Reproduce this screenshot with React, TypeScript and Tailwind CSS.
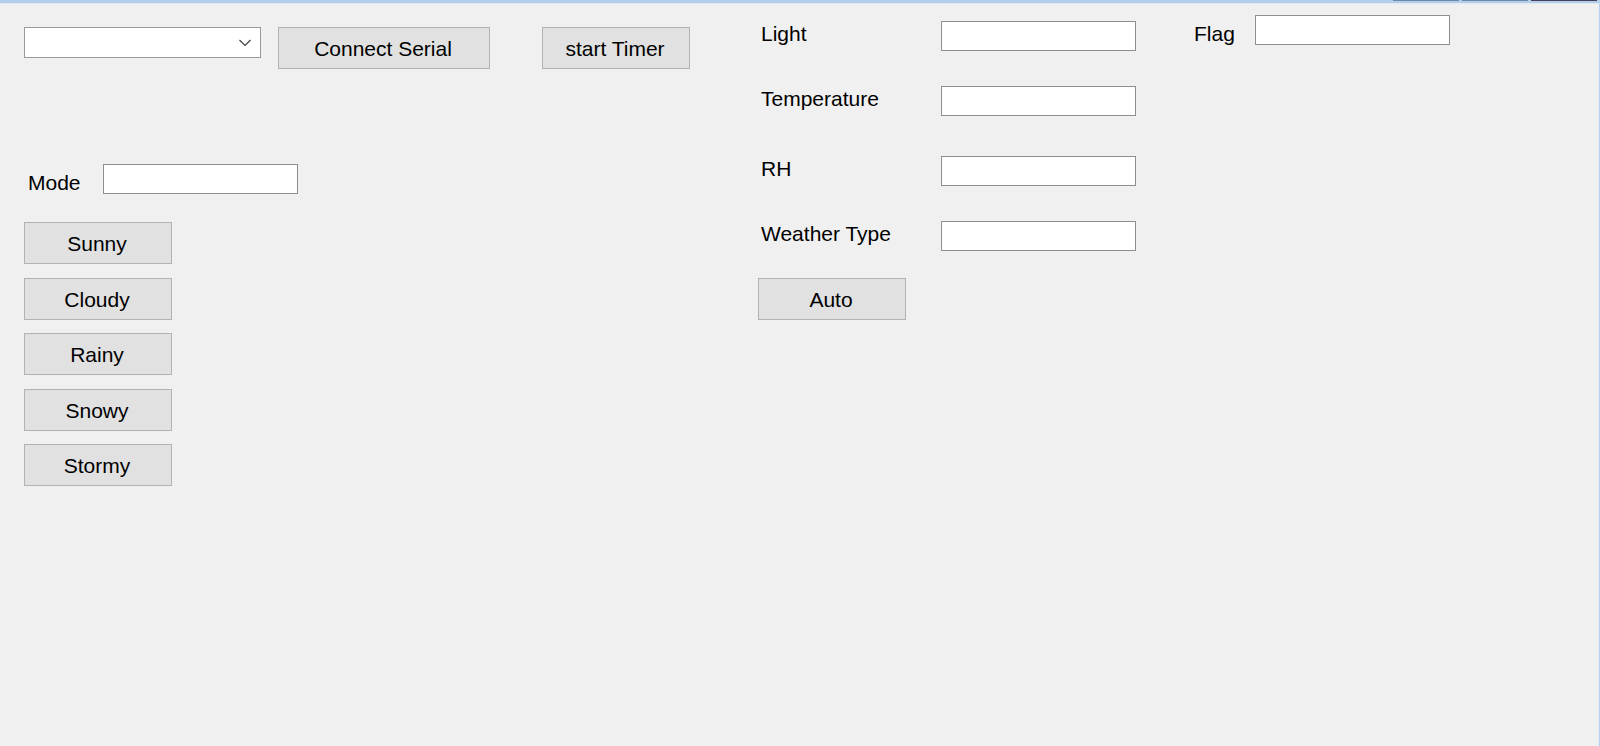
import type { ReactNode } from "react";

const weatherModes = ["Sunny", "Cloudy", "Rainy", "Snowy", "Stormy"];

function Button({ children, wide = false }: { children: ReactNode; wide?: boolean }) {
  return (
    <button
      type="button"
      className={`${wide ? "w-[212px]" : "w-[148px]"} h-[42px] shrink-0 border border-[#b2b2b2] bg-[#e1e1e1] pt-0.5 pr-0.5 text-center`}
    >
      {children}
    </button>
  );
}

function TextBox({ id }: { id: string }) {
  return (
    <input
      id={id}
      type="text"
      className="h-[30px] w-[195px] shrink-0 border border-[#8e8e8e] bg-white px-1 outline-none"
    />
  );
}

function Reading({ id, label }: { id: string; label: string }) {
  return (
    <div className="flex items-start">
      <label htmlFor={id} className="w-[180px] shrink-0 leading-[26px]">
        {label}
      </label>
      <TextBox id={id} />
    </div>
  );
}

export default function App() {
  return (
    <div className="flex min-h-screen flex-col border-r border-[#b9d1ea] bg-[#f0f0f0] font-['Liberation_Sans',Arial,sans-serif] text-[21px] leading-[22px] text-black">
      <header className="flex h-1 items-start justify-end gap-[3px] border-b border-[#dfe9f3] bg-[#b4cde8] pr-0.5">
        <span className="h-px w-[66px] bg-[#6f87ac]" />
        <span className="h-px w-[66px] bg-[#6f87ac]" />
        <span className="h-px w-[66px] bg-[#453f5c]" />
      </header>

      <main className="grid grow grid-cols-[758fr_436fr_404fr] items-start border-r border-[#e3edf6]">
        <section className="pt-[23px] pl-6">
          <div className="flex items-start">
            <div className="relative">
              <select
                aria-label="Serial port"
                className="block h-[31px] w-[237px] appearance-none border border-[#9a9a9a] bg-white px-1 outline-none"
              >
                <option value=""></option>
              </select>
              <svg
                viewBox="0 0 12 8"
                className="pointer-events-none absolute top-3 right-[10px] h-2 w-3"
                fill="none"
                stroke="#404040"
                strokeWidth="1.2"
              >
                <path d="M0.5 1 L6 6.5 L11.5 1" />
              </svg>
            </div>
            <div className="flex gap-[52px] pl-[17px]">
              <Button wide>Connect Serial</Button>
              <Button>start Timer</Button>
            </div>
          </div>

          <div className="flex items-end pt-[95px] pl-1">
            <label htmlFor="mode" className="w-[75px]">
              Mode
            </label>
            <TextBox id="mode" />
          </div>

          <div className="flex h-[292px] flex-col justify-between pt-7">
            {weatherModes.map((mode) => (
              <Button key={mode}>{mode}</Button>
            ))}
          </div>
        </section>

        <section className="pt-[17px]">
          <div className="flex flex-col gap-10 pl-[3px]">
            <div className="flex flex-col gap-[35px]">
              <Reading id="light" label="Light" />
              <Reading id="temperature" label="Temperature" />
            </div>
            <div className="flex flex-col gap-[35px]">
              <Reading id="rh" label="RH" />
              <Reading id="weather-type" label="Weather Type" />
            </div>
          </div>
          <div className="pt-[27px]">
            <Button>Auto</Button>
          </div>
        </section>

        <section className="flex items-end pt-[11px]">
          <label htmlFor="flag" className="w-[61px]">
            Flag
          </label>
          <TextBox id="flag" />
        </section>
      </main>
    </div>
  );
}
